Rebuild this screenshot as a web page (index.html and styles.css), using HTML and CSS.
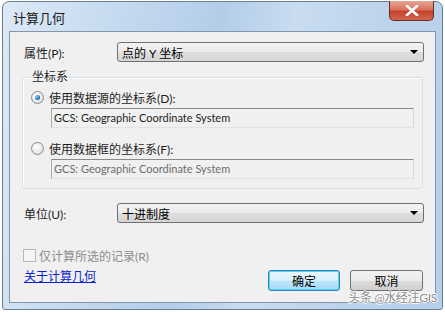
FILE: index.html
```html
<!DOCTYPE html>
<html lang="zh-CN">
<head>
    <meta charset="UTF-8">
    <title>计算几何</title>
    <link rel="stylesheet" href="styles.css">
</head>
<body>
    <div class="window">
        <div class="titlebar">
            <span class="title">计算几何</span>
            <span class="close">
                <svg width="14" height="11" viewBox="0 0 14 11">
                    <path d="M2 1 L12 10 M12 1 L2 10" stroke="#fff" stroke-width="2.6" stroke-linecap="square"/>
                </svg>
            </span>
        </div>

        <div class="client">
            <div class="row">
                <label class="label">属性(P):</label>
                <div class="combo">
                    <span>点的 Y 坐标</span>
                    <span class="arrow"></span>
                </div>
            </div>

            <fieldset class="group">
                <legend>坐标系</legend>
                <div class="option">
                    <span class="radio checked"></span>
                    <span>使用数据源的坐标系(D):</span>
                </div>
                <div class="textbox">GCS: Geographic Coordinate System</div>
                <div class="option second">
                    <span class="radio"></span>
                    <span>使用数据框的坐标系(F):</span>
                </div>
                <div class="textbox disabled">GCS: Geographic Coordinate System</div>
            </fieldset>

            <div class="row units">
                <label class="label">单位(U):</label>
                <div class="combo">
                    <span>十进制度</span>
                    <span class="arrow"></span>
                </div>
            </div>

            <div class="check-row">
                <span class="checkbox"></span>
                <span>仅计算所选的记录(R)</span>
            </div>

            <div class="bottom">
                <a href="#" class="link">关于计算几何</a>
                <div class="buttons">
                    <button class="btn default">确定</button>
                    <button class="btn">取消</button>
                </div>
            </div>
        </div>

        <!-- 水印 -->
        <span class="watermark">头条 @水经注GIS</span>
    </div>
</body>
</html>
```

FILE: styles.css
```css
body {
    margin: 0;
    background: #ffffff;
    font-family: Lato, "Noto Sans CJK SC", sans-serif;
    font-size: 12px;
    color: #1e1e1e;
}
.window {
    position: relative;
    margin: 1px 0 0 2px;
    width: 439px;
    height: 307px;
    border: 1px solid #6a7d92;
    border-radius: 7px 7px 3px 3px;
    background: linear-gradient(100deg, #dce9f6 0%, #c4d9ef 25%, #b3cde9 45%, #c9dcf0 60%, #bcd3ec 80%, #b5cfea 100%);
    display: flex;
    flex-direction: column;
}
.titlebar {
    height: 29px;
    display: flex;
    align-items: flex-start;
    justify-content: space-between;
    padding-left: 10px;
}
.title {
    margin-top: 6px;
    font-size: 13px;
    color: #1a1a1a;
}
.close {
    width: 43px;
    height: 19px;
    margin-right: 8px;
    margin-top: -1px;
    border: 1px solid #6e2c25;
    border-top: none;
    border-radius: 0 0 5px 5px;
    background: linear-gradient(#e7a594 0%, #d9735d 45%, #c2442c 55%, #d0664c 100%);
    display: flex;
    align-items: center;
    justify-content: center;
}
.client {
    flex: 1;
    margin: 0 6px 6px 6px;
    border: 1px solid #8196ab;
    background: #f0f0f0;
    padding: 10px 11px 0 12px;
    display: flex;
    flex-direction: column;
}
.row {
    display: flex;
    align-items: center;
    height: 20px;
}
.label {
    width: 93px;
    padding-left: 2px;
}
.combo {
    flex: 1;
    height: 18px;
    border: 1px solid #707070;
    border-radius: 3px;
    background: linear-gradient(#f3f3f3 0%, #ebebeb 50%, #dddddd 51%, #d6d6d6 100%);
    display: flex;
    align-items: center;
    justify-content: space-between;
    padding: 0 5px 0 4px;
    color: #000;
}
.arrow {
    width: 0;
    height: 0;
    border-left: 4px solid transparent;
    border-right: 4px solid transparent;
    border-top: 4px solid #000;
}
.group {
    margin: 7px 1px 0 0;
    padding: 0 8px 9px 8px;
    border: 1px solid #d5dfe5;
    border-radius: 3px;
    box-shadow: inset 1px 1px 0 #ffffff;
    min-width: 0;
}
.group legend {
    padding: 0 1px;
    margin-left: 0;
    line-height: 16px;
    color: #1e1e1e;
}
.option {
    display: flex;
    align-items: center;
    gap: 5px;
    height: 16px;
    margin-top: 4px;
}
.option.second {
    margin-top: 12px;
}
.radio {
    width: 11px;
    height: 11px;
    border: 1px solid #8a8a8a;
    border-radius: 50%;
    background: radial-gradient(circle at 40% 35%, #ffffff 0%, #e8e8e8 60%, #cfcfcf 100%);
    display: flex;
    align-items: center;
    justify-content: center;
}
.radio.checked::after {
    content: "";
    width: 5px;
    height: 5px;
    border-radius: 50%;
    background: radial-gradient(circle at 35% 35%, #8fd0f5 0%, #2a74c4 60%, #13417d 100%);
}
.textbox {
    margin: 3px 0 0 20px;
    height: 18px;
    border: 1px solid #acacac;
    border-top-color: #8a8a8a;
    border-bottom-color: #e3e3e3;
    border-right-color: #dadada;
    background: #f0f0f0;
    padding-left: 2px;
    line-height: 18px;
    font-size: 11px;
    color: #1e1e1e;
    white-space: nowrap;
    overflow: hidden;
}
.textbox.disabled {
    color: #6d6d6d;
}
.units {
    margin-top: 14px;
}
.check-row {
    display: flex;
    align-items: center;
    gap: 3px;
    height: 16px;
    margin-top: 24px;
    color: #8d8d8d;
}
.checkbox {
    width: 11px;
    height: 11px;
    margin-left: 1px;
    border: 1px solid #b8b8b8;
    background: #f5f5f5;
}
.bottom {
    display: flex;
    justify-content: space-between;
    align-items: flex-start;
    margin-top: 6px;
}
.link {
    margin-left: 2px;
    color: #0b23c9;
    text-decoration: underline;
    line-height: 16px;
}
.buttons {
    display: flex;
    gap: 10px;
    margin: 1px 1px 0 0;
}
.btn {
    width: 73px;
    height: 21px;
    border: 1px solid #707070;
    border-radius: 3px;
    background: linear-gradient(#f3f3f3 0%, #ebebeb 50%, #dddddd 51%, #cfcfcf 100%);
    font-family: inherit;
    font-size: 12px;
    color: #000;
    padding: 0;
}
.btn.default {
    width: 72px;
    border-color: #3c7fb1;
    box-shadow: inset 0 0 0 1px #48d8fb;
    background: linear-gradient(#eaf6fd 0%, #d9f0fc 50%, #bee6fd 51%, #a7d9f5 100%);
}
.watermark {
    position: absolute;
    right: 5px;
    bottom: 4px;
    font-size: 12px;
    color: #8a8a8a;
    text-shadow: 1px 0 0 #fff, -1px 0 0 #fff, 0 1px 0 #fff, 0 -1px 0 #fff;
    letter-spacing: -0.3px;
}
```
